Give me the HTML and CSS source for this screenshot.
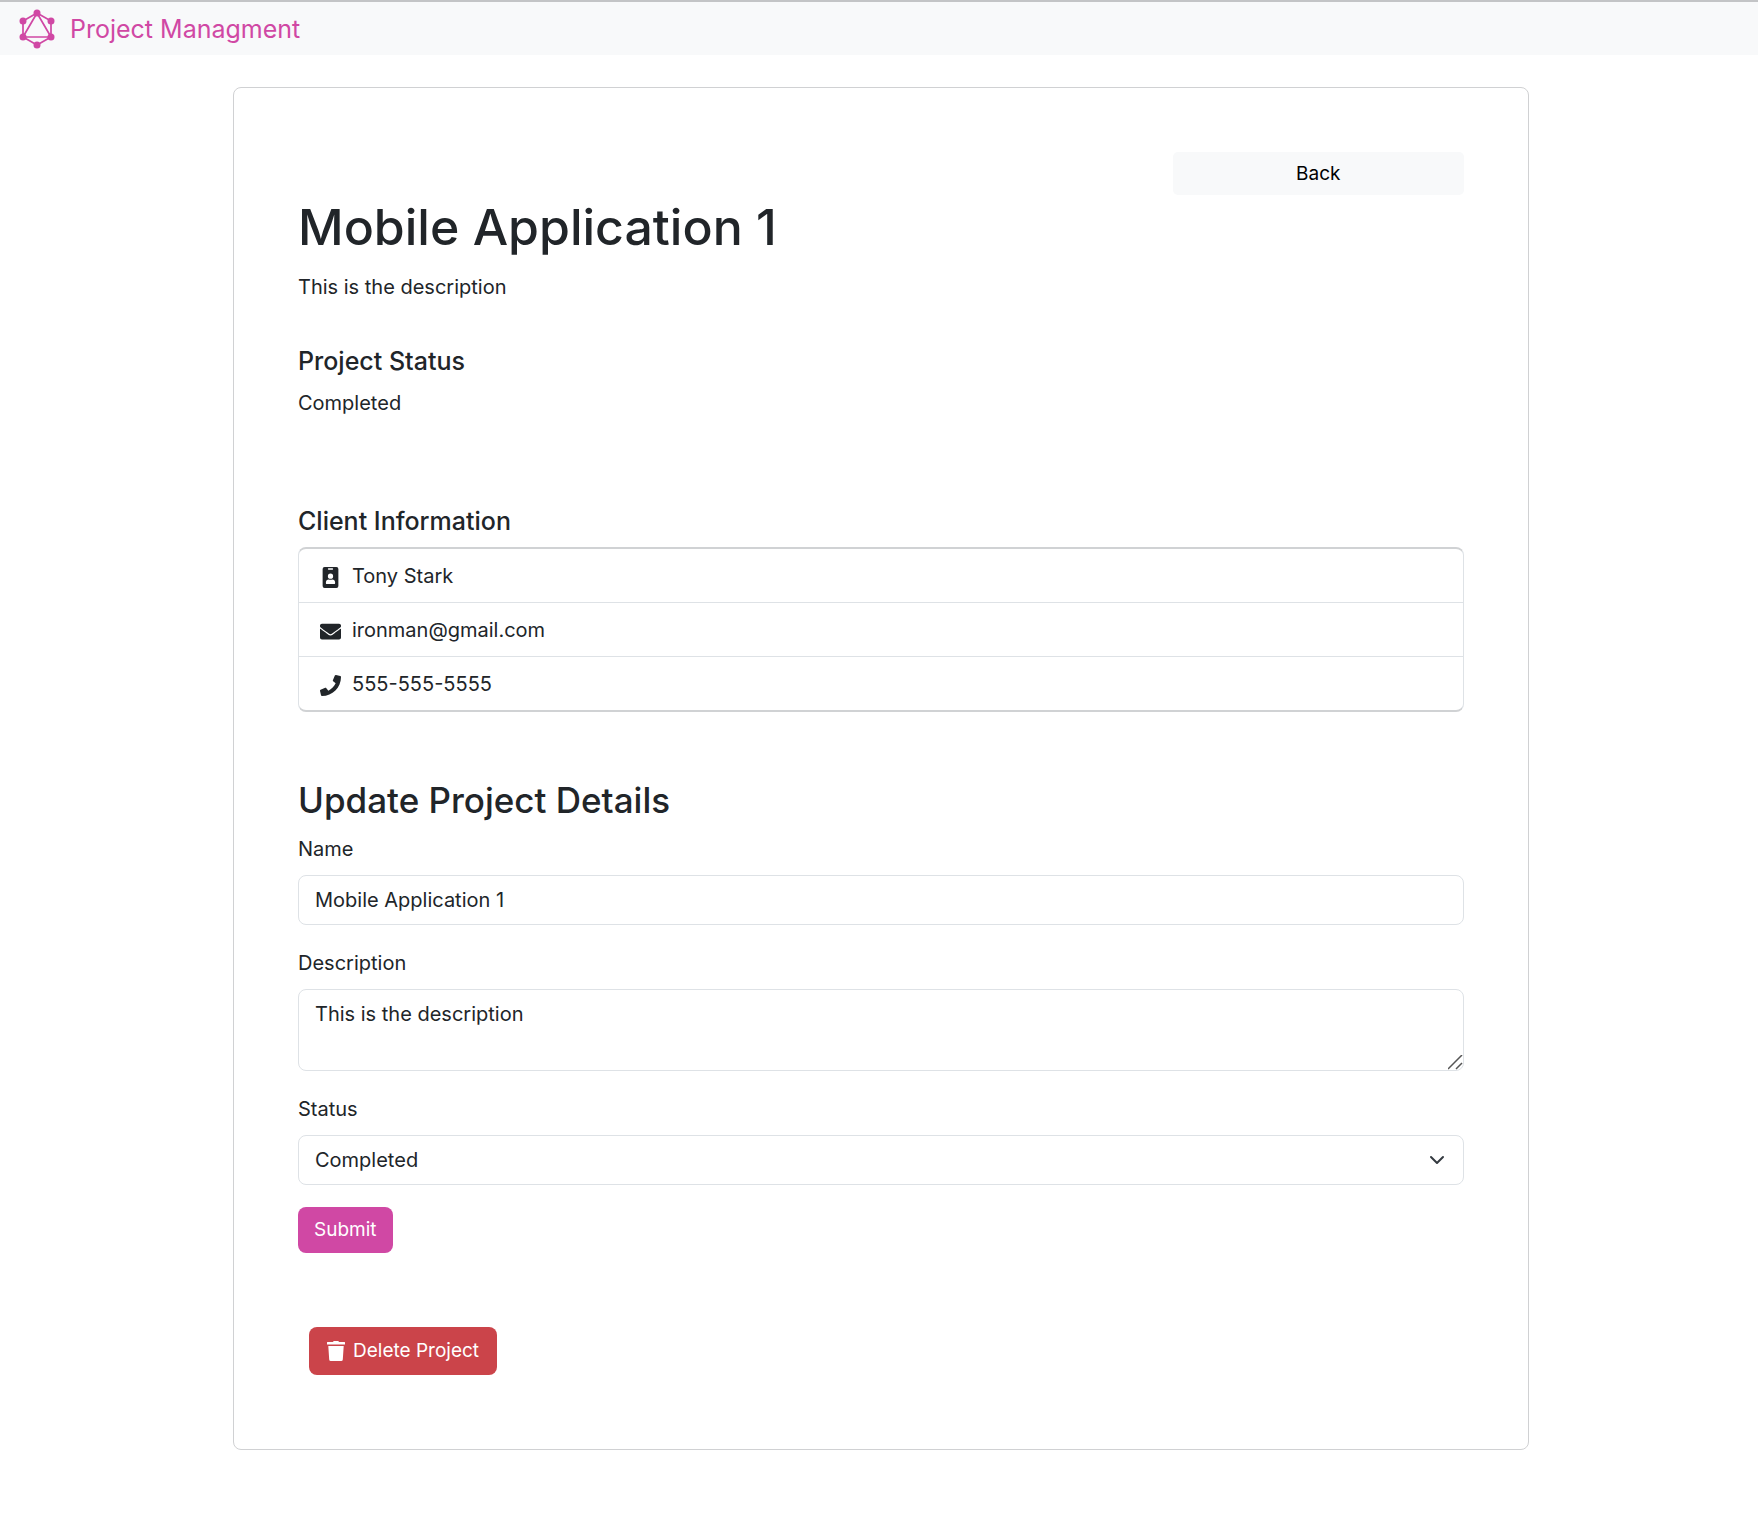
FILE: index.html
```html
<!DOCTYPE html>
<html lang="en">
<head>
  <meta charset="utf-8">
  <meta name="viewport" content="width=device-width, initial-scale=1">
  <title>Project Managment</title>
  <link rel="stylesheet" href="styles.css">
</head>
<body>
  <nav class="navbar">
    <a class="brand" href="/">
      <svg class="brand-logo" viewBox="0 0 36 40" aria-hidden="true">
        <path d="M18 4 32 12V28L18 36 4 28V12ZM18 4 32 28H4Z" fill="none" stroke="currentColor" stroke-width="1.7"/>
        <g fill="currentColor">
          <circle cx="18" cy="4" r="3.5"/><circle cx="32" cy="12" r="3.5"/><circle cx="32" cy="28" r="3.5"/>
          <circle cx="18" cy="36" r="3.5"/><circle cx="4" cy="28" r="3.5"/><circle cx="4" cy="12" r="3.5"/>
        </g>
      </svg>
      <span>Project Managment</span>
    </a>
  </nav>

  <main class="container">
    <article class="card">
      <a class="btn-back" href="/">Back</a>
      <h1 class="title">Mobile Application 1</h1>
      <p class="text">This is the description</p>

      <h5 class="subtitle">Project Status</h5>
      <p class="text">Completed</p>

      <h5 class="subtitle subtitle-client">Client Information</h5>
      <ul class="list">
        <li class="list-item">
          <svg class="icon" viewBox="0 0 512 512" aria-hidden="true"><path fill="currentColor" fill-rule="evenodd" d="M112 0H400a48 48 0 0 1 48 48V464a48 48 0 0 1-48 48H112a48 48 0 0 1-48-48V48A48 48 0 0 1 112 0ZM208 32a16 16 0 0 0 0 32H304a16 16 0 0 0 0-32ZM256 160a64 64 0 1 0 0 128 64 64 0 0 0 0-128ZM211 304C172 304 144 334 144 370V394C144 407 154 416 166 416H346C358 416 368 407 368 394V370C368 334 340 304 301 304C274 316 238 316 211 304Z"/></svg>
          Tony Stark
        </li>
        <li class="list-item">
          <svg class="icon" viewBox="0 0 512 512" aria-hidden="true"><path fill="currentColor" d="M502.3 190.8c3.9-3.1 9.7-.2 9.7 4.7V400c0 26.5-21.5 48-48 48H48c-26.5 0-48-21.5-48-48V195.6c0-5 5.7-7.8 9.7-4.7 22.4 17.4 52.1 39.5 154.1 113.6 21.1 15.4 56.7 47.8 92.2 47.6 35.7.3 72-32.8 92.3-47.6 102-74.1 131.6-96.3 154-113.7zM256 320c23.2.4 56.6-29.2 73.4-41.4 132.7-96.3 142.8-104.7 173.4-128.7 5.8-4.5 9.2-11.5 9.2-18.9v-19c0-26.5-21.5-48-48-48H48c-26.5 0-48 21.5-48 48v19c0 7.4 3.4 14.3 9.2 18.9 30.6 23.9 40.7 32.4 173.4 128.7 16.8 12.2 50.2 41.8 73.4 41.4z"/></svg>
          ironman@gmail.com
        </li>
        <li class="list-item">
          <svg class="icon" viewBox="0 0 512 512" aria-hidden="true"><path fill="currentColor" d="M493.4 24.6l-104-24c-11.3-2.6-22.9 3.3-27.5 13.9l-48 112c-4.2 9.8-1.4 21.3 6.9 28l60.6 49.6c-36 76.7-98.9 140.5-177.2 177.2l-49.6-60.6c-6.8-8.3-18.2-11.1-28-6.9l-112 48C3.9 366.5-2 378.1.6 389.4l24 104C27.1 504.2 36.7 512 48 512c256.1 0 464-207.5 464-464 0-11.2-7.7-20.9-18.6-23.4z"/></svg>
          555-555-5555
        </li>
      </ul>

      <h3 class="form-title">Update Project Details</h3>
      <form class="form">
        <div class="field">
          <label for="name">Name</label>
          <input class="control" id="name" type="text" value="Mobile Application 1">
        </div>
        <div class="field">
          <label for="description">Description</label>
          <textarea class="control control-area" id="description">This is the description</textarea>
        </div>
        <div class="field">
          <label for="status">Status</label>
          <select class="control control-select" id="status">
            <option>Not Started</option>
            <option>In Progress</option>
            <option selected>Completed</option>
          </select>
        </div>
        <button class="btn btn-primary" type="submit">Submit</button>
      </form>

      <button class="btn btn-danger" type="button">
        <svg class="icon-trash" viewBox="0 0 18 20" aria-hidden="true"><path fill="currentColor" d="M6 1Q6.300 0 7 0H11Q11.700 0 12 1H17.500Q18 1 18 1.500V3.500H0V1.500Q0 1 .5 1ZM1.300 5H16.700L15.800 18.500Q15.700 20 14.200 20H3.800Q2.300 20 2.200 18.500Z"/></svg>
        Delete Project
      </button>
    </article>
  </main>
</body>
</html>
```
FILE: styles.css
```css
* {
  box-sizing: border-box;
}

body {
  margin: 0;
  background: #fff;
  color: #212529;
  font-family: Inter, "Liberation Sans", sans-serif;
  font-size: 20px;
  line-height: 32px;
}

h1, h3, h5, p, ul {
  margin: 0;
  padding: 0;
  font-weight: 500;
}

.navbar {
  display: flex;
  padding: 7px 19px 6px;
  border-top: 2px solid #c3c4c6;
  background: #f8f9fa;
}

.brand {
  display: flex;
  align-items: center;
  gap: 15px;
  color: #d048a4;
  font-size: 25px;
  line-height: 40px;
  text-decoration: none;
}

.brand-logo {
  width: 36px;
  height: 40px;
}

.container {
  padding: 32px 13px 32px 17px;
}

.card {
  display: flex;
  flex-direction: column;
  align-items: stretch;
  width: 75%;
  margin: 0 auto;
  padding: 64px;
  padding-bottom: 74px;
  border: 1px solid #d0d1d3;
  border-radius: 8px;
}

.btn-back {
  align-self: flex-end;
  width: 25%;
  padding: 5px;
  border-radius: 5px;
  background: #f8f9fa;
  color: #000;
  font-size: 19px;
  line-height: 33px;
  text-align: center;
  text-decoration: none;
}

.title {
  margin-bottom: 11px;
  font-size: 50px;
  line-height: 65px;
}

.text {
  font-weight: 400;
}

.subtitle {
  margin-top: 42px;
  margin-bottom: 10px;
  font-size: 25px;
}

.subtitle-client {
  margin-top: 86px;
}

.list {
  border: 1px solid #dee2e6;
  border-width: 2px 1px;
  border-top-color: #d0d2d4;
  border-bottom-color: #d0d2d4;
  border-radius: 8px;
  list-style: none;
  font-weight: 400;
}

.list-item {
  display: flex;
  align-items: center;
  gap: 11px;
  padding: 11px 21px 10px;
}

.list-item + .list-item {
  border-top: 1px solid #dee2e6;
}

.icon {
  width: 21px;
  height: 21px;
  margin-top: 2px;
}

.form-title {
  margin-top: 66px;
  margin-bottom: 10px;
  font-size: 35px;
  line-height: 45px;
}

.form {
  display: flex;
  flex-direction: column;
  align-items: flex-start;
  gap: 22px;
}

.field {
  display: flex;
  flex-direction: column;
  gap: 10px;
  width: 100%;
}

.control {
  width: 100%;
  height: 50px;
  padding: 8px 16px;
  border: 1px solid #dee2e6;
  border-radius: 8px;
  background-color: #fff;
  color: inherit;
  font: inherit;
}

.control-area {
  display: block;
  height: 82px;
  resize: vertical;
}

.control-area::-webkit-resizer {
  background: url("data:image/svg+xml,%3Csvg xmlns='http://www.w3.org/2000/svg' viewBox='0 0 15 15'%3E%3Cpath d='M0 14 14 0M8 14 14 8' stroke='%23555' stroke-width='1.5'/%3E%3C/svg%3E") center / 15px 15px no-repeat;
}

.control-select {
  appearance: none;
  background-image: url("data:image/svg+xml,%3Csvg xmlns='http://www.w3.org/2000/svg' viewBox='0 0 16 16'%3E%3Cpath fill='none' stroke='%23343a40' stroke-linecap='round' stroke-linejoin='round' stroke-width='2' d='m2 5 6 6 6-6'/%3E%3C/svg%3E");
  background-position: right 18px center;
  background-repeat: no-repeat;
  background-size: 16px 16px;
}

.btn {
  border: 0;
  border-radius: 8px;
  color: #fff;
  font: inherit;
  font-size: 19px;
}

.btn-primary {
  padding: 7px 16px;
  background: #d048a4;
}

.btn-danger {
  display: flex;
  align-items: center;
  align-self: flex-start;
  gap: 8px;
  margin-top: 74px;
  margin-left: 11px;
  padding: 8px 18px;
  background: #cb444a;
}

.icon-trash {
  width: 18px;
  height: 20px;
}
```
